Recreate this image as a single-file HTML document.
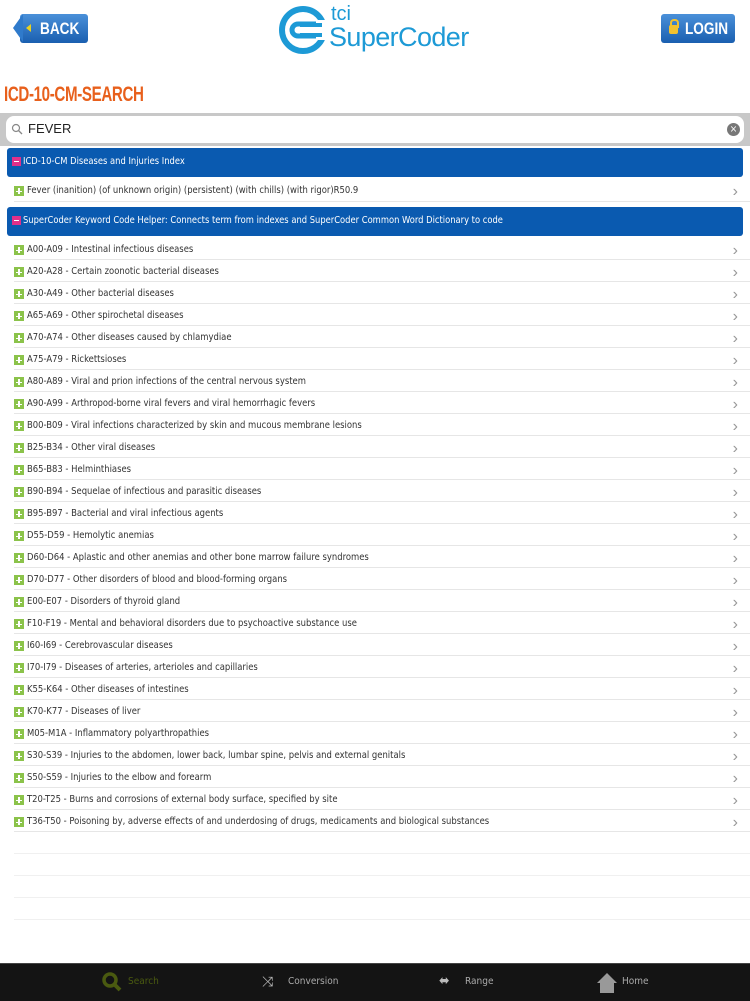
<!DOCTYPE html><html><head><style>
body{margin:0;width:750px;height:1000px;background:#fff;position:relative;font-family:"DejaVu Sans Condensed","DejaVu Sans","Liberation Sans",sans-serif;overflow:hidden}
.abs{position:absolute}
.btn{position:absolute;top:14px;height:29px;background:linear-gradient(#4a90d9,#1a5fb0);border-radius:3px;color:#fff;font:bold 17px "Liberation Sans Narrow","Liberation Sans",sans-serif;line-height:29px;box-sizing:border-box}
.btn span{display:inline-block;transform:scaleX(.8);transform-origin:left}
.hdr{position:absolute;left:7px;width:736px;height:29px;background:#0a5ab0;border-radius:3px;color:#fff;font-size:9.3px;line-height:27px;padding-left:16px;box-sizing:border-box}
.minus{position:absolute;left:5px;top:9px;width:9px;height:9px;background:#e0308a;}
.minus:after{content:"";position:absolute;left:2px;top:4px;width:5px;height:1px;background:#fff}
.row{position:absolute;left:14px;width:736px;height:22px;border-bottom:1px solid #e6e6e6;font-size:9.4px;color:#333;line-height:24px;padding-left:13px;box-sizing:border-box}
.plus{position:absolute;left:0;top:7px;width:10px;height:10px;background:#8bc34a}
.plus:before{content:"";position:absolute;left:2px;top:4.5px;width:6px;height:1.5px;background:#fff}
.plus:after{content:"";position:absolute;left:4.3px;top:2px;width:1.5px;height:6px;background:#fff}
.chev{position:absolute;right:12px;top:1px;color:#999;font-size:16px;font-family:"Liberation Sans",sans-serif}
.tab{position:absolute;top:976px;font-size:10px;color:#aaa}
</style></head><body>
<div class="btn" style="left:20px;width:68px;padding-left:20px"><span>BACK</span></div>
<div class="abs" style="left:13px;top:14px;width:0;height:0;border-top:14.5px solid transparent;border-bottom:14.5px solid transparent;border-right:10px solid #2f7acb"></div>
<div class="abs" style="left:26px;top:24px;width:0;height:0;border-top:4px solid transparent;border-bottom:4px solid transparent;border-right:5px solid #e8d020"></div>
<div class="btn" style="left:661px;width:74px;padding-left:24px"><span>LOGIN</span></div>
<div class="abs" style="left:669px;top:25px;width:9px;height:9px;background:#f2c12e;border-radius:2px"></div>
<div class="abs" style="left:670px;top:19px;width:5px;height:7px;border:2px solid #f2c12e;border-bottom:none;border-radius:4px 4px 0 0"></div>
<svg class="abs" style="left:276px;top:4px" width="60" height="52" viewBox="0 0 60 52"><circle cx="27" cy="26" r="21" fill="none" stroke="#1d9ad6" stroke-width="6"/><path d="M44 20H22a6 6 0 0 0 0 12h22" fill="none" stroke="#1d9ad6" stroke-width="5"/><rect x="40" y="16" width="16" height="20" fill="#fff"/><path d="M46 21H24M46 31H24" stroke="#1d9ad6" stroke-width="4"/></svg>
<div class="abs" style="left:331px;top:3px;color:#1d9ad6;font:20px 'Liberation Sans',sans-serif">tci</div>
<div class="abs" style="left:329px;top:22px;color:#1d9ad6;font:27px 'Liberation Sans',sans-serif;letter-spacing:-.6px">SuperCoder</div>
<div class="abs" style="left:4px;top:83px;color:#e8601c;font:bold 21px 'Liberation Sans Narrow','Liberation Sans',sans-serif;transform:scaleX(.72);transform-origin:left;letter-spacing:-.5px">ICD-10-CM-SEARCH</div>
<div class="abs" style="left:0;top:113px;width:750px;height:33px;background:#c8c8c8"></div>
<div class="abs" style="left:6px;top:116px;width:738px;height:27px;background:#fff;border-radius:8px"></div>
<svg class="abs" style="left:11px;top:123px" width="12" height="12"><circle cx="5" cy="5" r="3.5" fill="none" stroke="#888" stroke-width="1.2"/><path d="M7.5 7.5L11 11" stroke="#888" stroke-width="1.3"/></svg>
<div class="abs" style="left:28px;top:121px;font:13px 'Liberation Sans',sans-serif;color:#222">FEVER</div>
<div class="abs" style="left:727px;top:123px;width:13px;height:13px;border-radius:50%;background:#777;color:#fff;font-size:10px;line-height:13px;text-align:center">×</div>
<div class="hdr" style="top:148px"><span class="minus"></span>ICD-10-CM Diseases and Injuries Index</div>
<div class="row" style="top:179px;height:23px;line-height:24px"><span class="plus"></span>Fever (inanition) (of unknown origin) (persistent) (with chills) (with rigor)R50.9<span class="chev">›</span></div>
<div class="hdr" style="top:207px"><span class="minus"></span>SuperCoder Keyword Code Helper: Connects term from indexes and SuperCoder Common Word Dictionary to code</div>
<div id="list"></div>
<script>
var items=["A00-A09 - Intestinal infectious diseases","A20-A28 - Certain zoonotic bacterial diseases","A30-A49 - Other bacterial diseases","A65-A69 - Other spirochetal diseases","A70-A74 - Other diseases caused by chlamydiae","A75-A79 - Rickettsioses","A80-A89 - Viral and prion infections of the central nervous system","A90-A99 - Arthropod-borne viral fevers and viral hemorrhagic fevers","B00-B09 - Viral infections characterized by skin and mucous membrane lesions","B25-B34 - Other viral diseases","B65-B83 - Helminthiases","B90-B94 - Sequelae of infectious and parasitic diseases","B95-B97 - Bacterial and viral infectious agents","D55-D59 - Hemolytic anemias","D60-D64 - Aplastic and other anemias and other bone marrow failure syndromes","D70-D77 - Other disorders of blood and blood-forming organs","E00-E07 - Disorders of thyroid gland","F10-F19 - Mental and behavioral disorders due to psychoactive substance use","I60-I69 - Cerebrovascular diseases","I70-I79 - Diseases of arteries, arterioles and capillaries","K55-K64 - Other diseases of intestines","K70-K77 - Diseases of liver","M05-M1A - Inflammatory polyarthropathies","S30-S39 - Injuries to the abdomen, lower back, lumbar spine, pelvis and external genitals","S50-S59 - Injuries to the elbow and forearm","T20-T25 - Burns and corrosions of external body surface, specified by site","T36-T50 - Poisoning by, adverse effects of and underdosing of drugs, medicaments and biological substances"];
var h="";items.forEach(function(t,i){h+='<div class="row" style="top:'+(238+i*22)+'px"><span class="plus"></span>'+t+'<span class="chev">›</span></div>'});
for(var j=0;j<4;j++)h+='<div class="row" style="top:'+(832+j*22)+'px;border-color:#f0f0f0"></div>';
document.getElementById("list").innerHTML=h;
</script>
<div class="abs" style="left:0;top:963px;width:750px;height:37px;background:#141414;border-top:1px solid #444"></div>
<svg class="abs" style="left:102px;top:972px" width="20" height="20"><circle cx="8" cy="8" r="6" fill="none" stroke="#4a5a10" stroke-width="3.5"/><path d="M12 12l6 6" stroke="#4a5a10" stroke-width="4"/></svg>
<div class="tab" style="left:128px;color:#4a5a10">Search</div>
<div class="tab" style="left:262px;top:974px;color:#bbb;font-size:14px">⤨</div>
<div class="tab" style="left:288px">Conversion</div>
<div class="tab" style="left:439px;top:973px;color:#bbb;font-size:14px">⬌</div>
<div class="tab" style="left:465px">Range</div>
<svg class="abs" style="left:596px;top:972px" width="22" height="22"><path d="M11 1L1 11h3v10h14V11h3z" fill="#999"/></svg>
<div class="tab" style="left:622px">Home</div>
</body></html>
